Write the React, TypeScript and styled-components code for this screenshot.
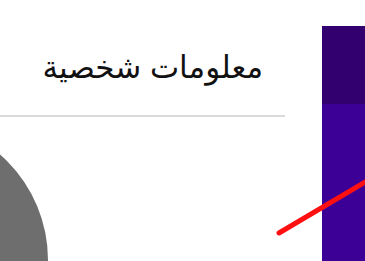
import React from "react";
import styled, { createGlobalStyle } from "styled-components";

const Global = createGlobalStyle`
  html, body { margin: 0; padding: 0; background: #ffffff; }
  body { width: 365px; height: 261px; overflow: hidden; position: relative; }
`;

const Page = styled.div`
  display: flex;
  width: 365px;
  height: 261px;
  overflow: hidden;
  position: relative;
  font-family: "Liberation Sans", "DejaVu Sans", Arial, sans-serif;
`;

const Main = styled.main`
  width: 322px;
  flex: none;
  display: flex;
  flex-direction: column;
`;

const Title = styled.h1`
  direction: rtl;
  margin: 0;
  width: 285px;
  box-sizing: border-box;
  padding: 50px 22px 0 0;
  height: 115px;
  font-size: 31px;
  font-weight: 400;
  line-height: 36px;
  color: #111;
  text-align: right;
  flex: none;
`;

const Divider = styled.div`
  height: 2px;
  width: 285px;
  background: #dadada;
  flex: none;
`;

const Avatar = styled.div`
  width: 280px;
  height: 280px;
  border-radius: 50%;
  background: #6e6e6e;
  margin: 3px 0 0 -232px;
  flex: none;
`;

const Sidebar = styled.aside`
  flex: 1;
  margin-top: 26px;
  display: flex;
  flex-direction: column;
  background: #3c0097;
`;

const SidebarHead = styled.div`
  height: 78px;
  background: #330070;
`;

const Pointer = styled.svg`
  position: absolute;
  left: 0;
  top: 0;
  pointer-events: none;
`;

export default function App() {
  return (
    <>
      <Global />
      <Page>
        <Main>
          <Title>معلومات شخصية</Title>
          <Divider />
          <Avatar />
        </Main>
        <Sidebar>
          <SidebarHead />
        </Sidebar>
        <Pointer width="365" height="261" viewBox="0 0 365 261">
          <line x1="279" y1="233" x2="372" y2="178" stroke="#ff1010" strokeWidth="5" strokeLinecap="round" />
        </Pointer>
      </Page>
    </>
  );
}
